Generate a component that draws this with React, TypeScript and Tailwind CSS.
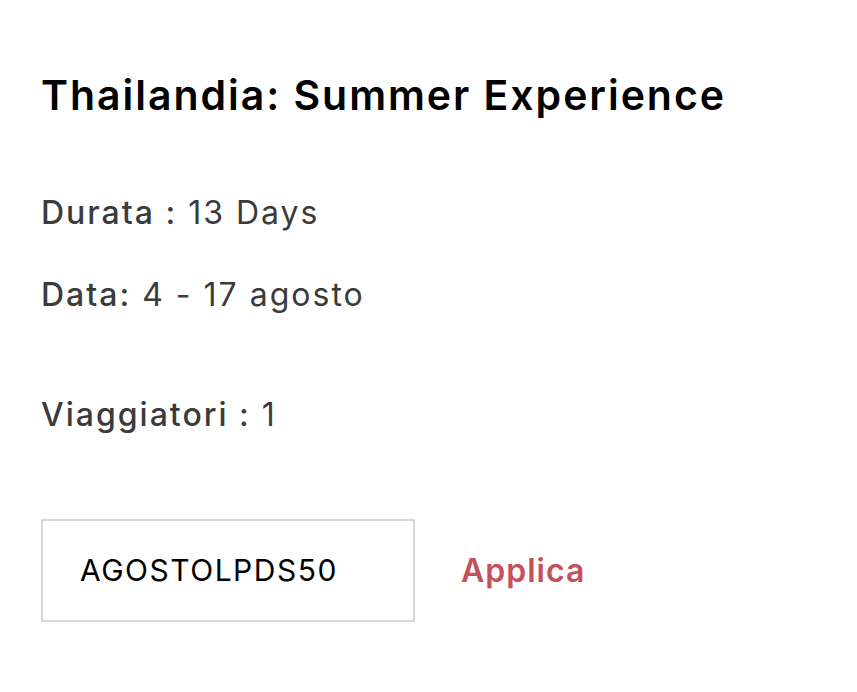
export default function App() {
  return (
    <div className="min-h-screen bg-white px-[41px] pt-[71px] text-[#3b3b3b]" style={{ fontFamily: 'Inter, "Noto Sans", sans-serif' }}>
      <h1 className="text-[41px] leading-[48px] font-semibold text-black tracking-[1.95px]">
        Thailandia: Summer Experience
      </h1>

      <div className="mt-[74px] text-[32px] leading-[40px] tracking-[2px]">
        <p>
          <span className="font-medium">Durata :</span> 13 Days
        </p>
        <p className="mt-[42px]">
          <span className="font-medium">Data:</span> 4 - 17 agosto
        </p>
        <p className="mt-[80px]">
          <span className="font-medium">Viaggiatori :</span> 1
        </p>
      </div>

      <div className="mt-[84px] flex items-center gap-[46px]">
        <div className="w-[374px] h-[103px] border-2 border-[#d9d9d9] flex items-center pl-[37px]">
          <span className="text-[30px] text-black tracking-[1.5px]">AGOSTOLPDS50</span>
        </div>
        <button className="text-[32px] font-semibold text-[#c4505b] tracking-[1px]">Applica</button>
      </div>
    </div>
  );
}
